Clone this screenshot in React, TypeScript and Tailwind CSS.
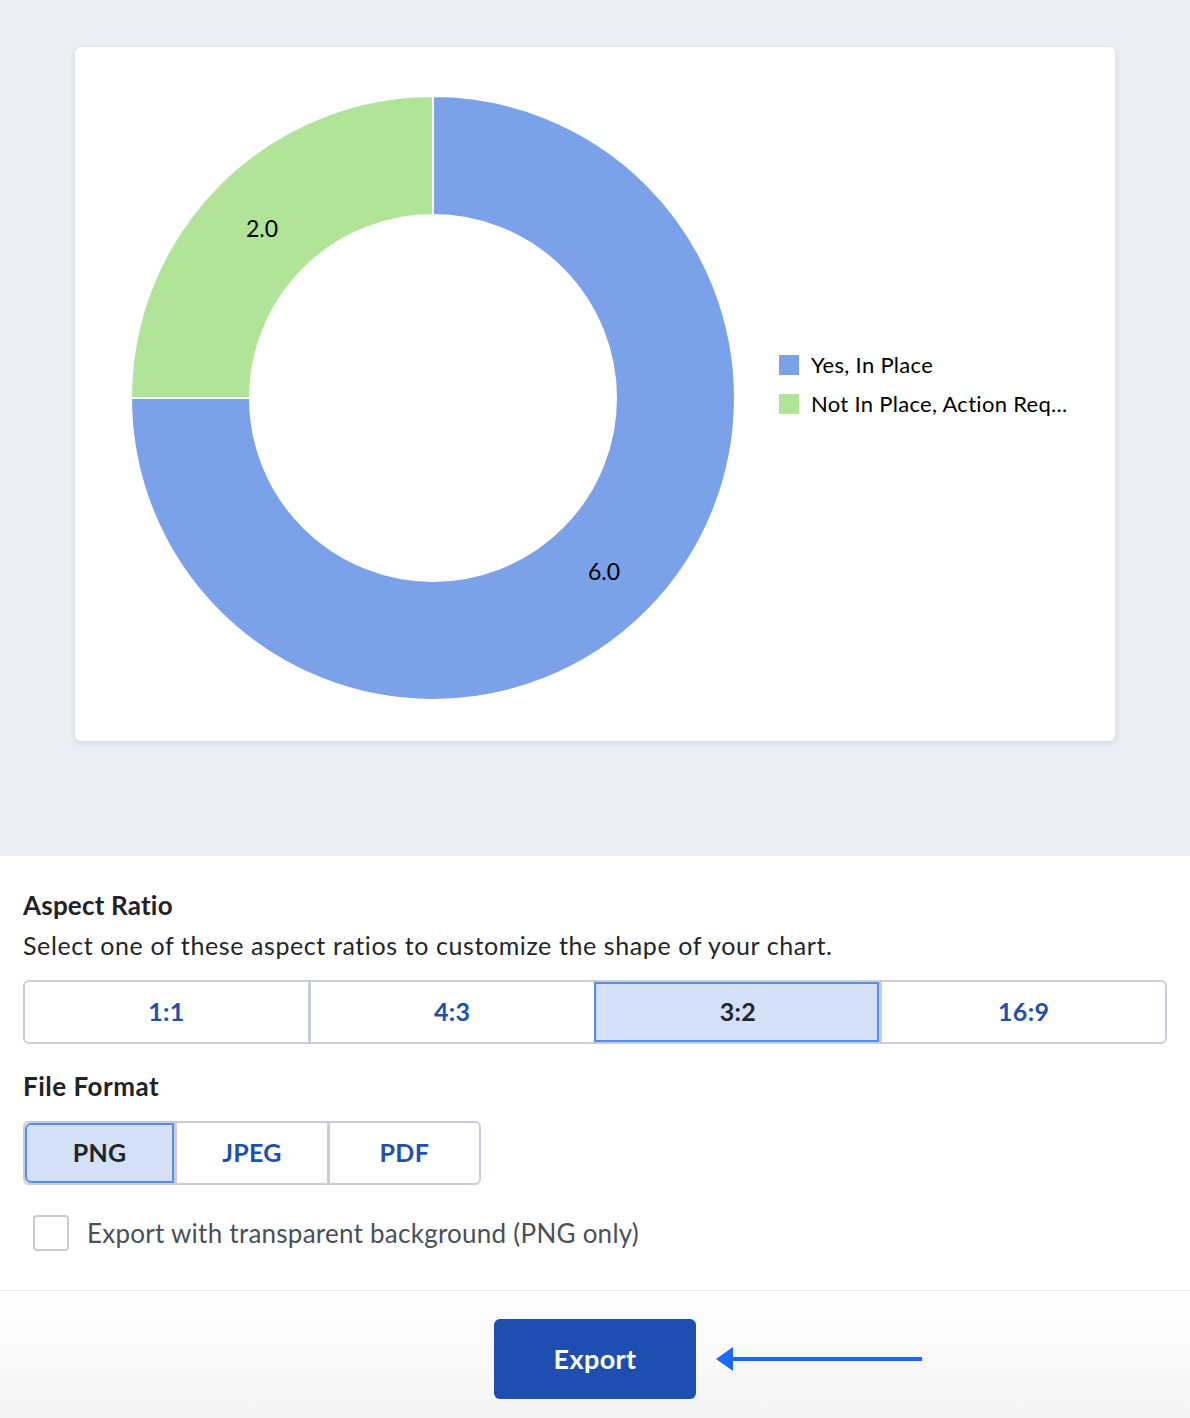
import { useState } from "react";

const CX = 358;
const CY = 351;
const RO = 302;
const RI = 183;

const ratios = ["1:1", "4:3", "3:2", "16:9"];
const formats = ["PNG", "JPEG", "PDF"];

function Donut() {
  const green = `M ${CX} ${CY - RO} A ${RO} ${RO} 0 0 0 ${CX - RO} ${CY} L ${CX - RI} ${CY} A ${RI} ${RI} 0 0 1 ${CX} ${CY - RI} Z`;
  const blue = `M ${CX} ${CY - RO} A ${RO} ${RO} 0 1 1 ${CX - RO} ${CY} L ${CX - RI} ${CY} A ${RI} ${RI} 0 1 0 ${CX} ${CY - RI} Z`;
  return (
    <svg width="700" height="694" viewBox="0 0 700 694" className="block">
      <path d={blue} fill="#7ba1e8" stroke="#ffffff" strokeWidth="2" />
      <path d={green} fill="#b1e399" stroke="#ffffff" strokeWidth="2" />
      <text x="187" y="190" textAnchor="middle" fontSize="23" fill="#000" fontFamily="Lato, sans-serif">
        2.0
      </text>
      <text x="529" y="533" textAnchor="middle" fontSize="23" fill="#000" fontFamily="Lato, sans-serif">
        6.0
      </text>
    </svg>
  );
}

export default function App() {
  const [ratio, setRatio] = useState("3:2");
  const [format, setFormat] = useState("PNG");
  const [transparent, setTransparent] = useState(false);

  return (
    <div className="w-[1190px] h-[1418px] bg-white font-['Lato',sans-serif] overflow-hidden">
      {/* Preview */}
      <div className="h-[856px] bg-[#ebeef3] pt-[47px] pl-[75px]">
        <div className="w-[1040px] h-[694px] bg-white rounded-md shadow-[0_2px_6px_rgba(30,40,70,0.12)] flex">
          <Donut />
          <div className="flex flex-col gap-[13px] pt-[305px] pl-[4px]">
            <div className="flex items-center gap-[12px]">
              <span className="w-[20px] h-[20px] bg-[#7ba1e8]" />
              <span className="text-[22px] leading-[26px] tracking-[0.3px] text-black">Yes, In Place</span>
            </div>
            <div className="flex items-center gap-[12px]">
              <span className="w-[20px] h-[20px] bg-[#b1e399]" />
              <span className="text-[22px] leading-[26px] tracking-[0.3px] text-black">
                Not In Place, Action Req...
              </span>
            </div>
          </div>
        </div>
      </div>

      {/* Options */}
      <div className="px-[23px] pt-[33px] pb-[39px] border-b border-[#e6e8ec]">
        <h2 className="text-[26px] leading-[32px] font-bold tracking-[0.2px] text-[#1f2329]">Aspect Ratio</h2>
        <p className="mt-[8px] text-[25px] leading-[32px] tracking-[0.6px] text-[#22252b]">
          Select one of these aspect ratios to customize the shape of your chart.
        </p>
        <div className="mt-[19px] flex h-[64px] rounded-md border-2 border-[#c9ccd9] overflow-hidden">
          {ratios.map((r, i) => (
            <button
              key={r}
              onClick={() => setRatio(r)}
              className={`flex-1 flex items-center justify-center text-[25px] font-bold tracking-[0.3px] ${
                ratio === r
                  ? "bg-[#d4e0f8] text-[#22252b] outline-2 outline-[#5b8ce6] -outline-offset-2"
                  : "bg-white text-[#1f4fb0]"
              } ${i > 0 ? "border-l-[3px] border-[#c9ccd9]" : ""}`}
            >
              {r}
            </button>
          ))}
        </div>

        <h2 className="mt-[26px] text-[26px] leading-[32px] font-bold tracking-[0.5px] text-[#1f2329]">
          File Format
        </h2>
        <div className="mt-[19px] flex w-[458px] h-[64px] rounded-md border-2 border-[#c9ccd9] overflow-hidden">
          {formats.map((f, i) => (
            <button
              key={f}
              onClick={() => setFormat(f)}
              className={`flex-1 flex items-center justify-center text-[25px] font-bold tracking-[0.3px] ${
                format === f
                  ? "bg-[#d4e0f8] text-[#22252b] outline-2 outline-[#5b8ce6] -outline-offset-2 rounded-l-md"
                  : "bg-white text-[#1f4fb0]"
              } ${i > 0 ? "border-l-[3px] border-[#c9ccd9]" : ""}`}
            >
              {f}
            </button>
          ))}
        </div>

        <label className="mt-[30px] ml-[10px] flex items-center gap-[18px] cursor-pointer">
          <input
            type="checkbox"
            checked={transparent}
            onChange={(e) => setTransparent(e.target.checked)}
            className="appearance-none w-[36px] h-[36px] rounded border-2 border-[#c9ccd4] bg-white"
          />
          <span className="text-[26px] leading-[36px] tracking-[0.25px] text-[#4a4f59]">
            Export with transparent background (PNG only)
          </span>
        </label>
      </div>

      {/* Footer */}
      <div className="h-[127px] bg-gradient-to-b from-white to-[#f4f4f5] flex justify-center pt-[28px]">
        <div className="relative">
          <button className="w-[202px] h-[80px] rounded-md bg-[#1e4fb0] text-white text-[27px] font-bold tracking-[0.4px]">
            Export
          </button>
          <svg
            className="absolute left-[222px] top-[28px]"
            width="208"
            height="24"
            viewBox="0 0 208 24"
          >
            <polygon points="0,12 17,0 17,24" fill="#1a6af5" />
            <rect x="16" y="10" width="190" height="4" fill="#1a6af5" />
          </svg>
        </div>
      </div>
    </div>
  );
}
